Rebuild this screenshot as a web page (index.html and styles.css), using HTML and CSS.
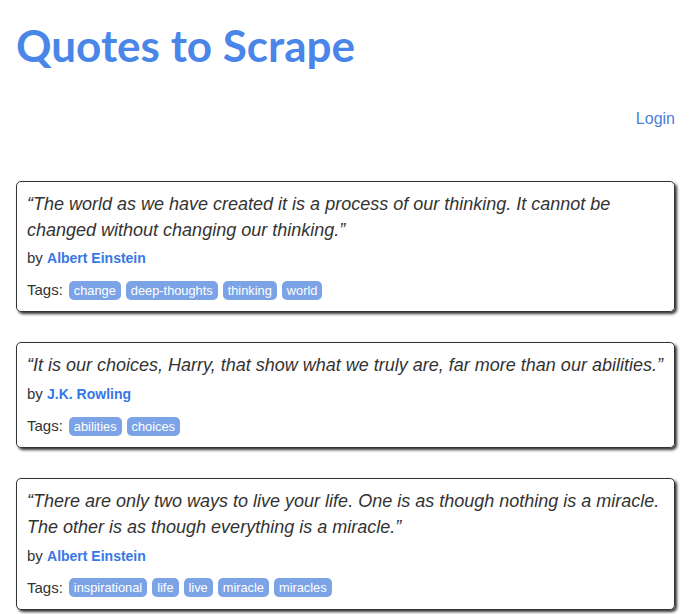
FILE: index.html
```html
<!DOCTYPE html>
<html>
<head>
<meta charset="utf-8">
<title>Quotes to Scrape</title>
<link rel="stylesheet" href="styles.css">
</head>
<body>
<div class="container">
  <header class="header">
    <h1 class="title"><a href="#">Quotes to Scrape</a></h1>
    <div class="login-row"><a class="login" href="#">Login</a></div>
  </header>
  <main class="quotes">
    <div class="quote">
      <span class="text">“The world as we have created it is a process of our thinking. It cannot be changed without changing our thinking.”</span>
      <div class="byline">by <a class="author" href="#">Albert Einstein</a></div>
      <div class="tags">Tags: <a class="tag" href="#">change</a><a class="tag" href="#">deep-thoughts</a><a class="tag" href="#">thinking</a><a class="tag" href="#">world</a></div>
    </div>
    <div class="quote">
      <span class="text">“It is our choices, Harry, that show what we truly are, far more than our abilities.”</span>
      <div class="byline">by <a class="author" href="#">J.K. Rowling</a></div>
      <div class="tags">Tags: <a class="tag" href="#">abilities</a><a class="tag" href="#">choices</a></div>
    </div>
    <div class="quote">
      <span class="text">“There are only two ways to live your life. One is as though nothing is a miracle. The other is as though everything is a miracle.”</span>
      <div class="byline">by <a class="author" href="#">Albert Einstein</a></div>
      <div class="tags">Tags: <a class="tag" href="#">inspirational</a><a class="tag" href="#">life</a><a class="tag" href="#">live</a><a class="tag" href="#">miracle</a><a class="tag" href="#">miracles</a></div>
    </div>
  </main>
</div>
</body>
</html>
```
FILE: styles.css
```css
html, body {
  margin: 0;
  padding: 0;
  background: #ffffff;
}
body {
  font-family: "Liberation Sans", Arial, Helvetica, sans-serif;
  color: #333333;
  font-size: 15px;
}
a {
  text-decoration: none;
}
.container {
  padding: 0 15px 0 16px;
}
.header {
  display: flex;
  flex-direction: column;
}
.title {
  margin: 21px 0 0 0;
  font-family: "Lato", "Open Sans", sans-serif;
  font-weight: 700;
  font-size: 44px;
  line-height: 49px;
}
.title a {
  color: #4a86e8;
}
.login-row {
  display: flex;
  justify-content: flex-end;
  margin-top: 37px;
}
.login {
  font-size: 16px;
  line-height: 23px;
  color: #4c80da;
}
.quotes {
  margin-top: 51px;
}
.quote {
  border: 1px solid #333333;
  border-radius: 5px;
  box-shadow: 2px 2px 3px #333333;
  padding: 10px 10px 11px 10px;
  margin-bottom: 30px;
}
.text {
  display: block;
  font-style: italic;
  font-size: 18px;
  line-height: 25.7px;
  margin-bottom: 5px;
}
.byline {
  font-size: 15px;
  line-height: 20px;
}
.author {
  font-size: 14px;
  font-weight: 700;
  color: #3677e8;
}
.tags {
  display: flex;
  align-items: center;
  gap: 5px;
  margin-top: 12px;
  font-size: 15px;
  line-height: 20px;
}
.tag {
  font-size: 12.8px;
  line-height: 15px;
  padding: 2px 5px;
  border-radius: 5px;
  color: #ffffff;
  background-color: #7ca3e6;
}
.tags > .tag:first-of-type {
  margin-left: 1px;
}
```
